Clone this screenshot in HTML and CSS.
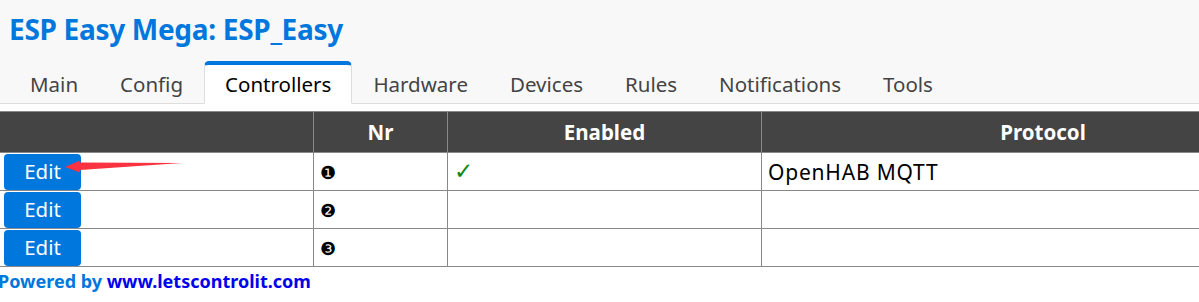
FILE: index.html
```html
<!DOCTYPE html>
<html>
<head>
<meta charset="utf-8">
<title>ESP Easy Mega: ESP_Easy</title>
<link rel="stylesheet" href="styles.css">
</head>
<body>
<header class="head">
  <h1 class="title">ESP Easy Mega: ESP_Easy</h1>
  <nav class="menubar">
    <a class="menu">Main</a>
    <a class="menu">Config</a>
    <a class="menu active">Controllers</a>
    <a class="menu">Hardware</a>
    <a class="menu">Devices</a>
    <a class="menu">Rules</a>
    <a class="menu">Notifications</a>
    <a class="menu">Tools</a>
  </nav>
</header>
<main class="content">
  <table class="multirow">
    <thead>
      <tr><th class="c1"></th><th class="c2">Nr</th><th class="c3">Enabled</th><th class="c4">Protocol</th></tr>
    </thead>
    <tbody>
      <tr><td class="btncell"><a class="button">Edit</a></td><td class="num">❶</td><td><span class="ok">✓</span></td><td class="proto">OpenHAB MQTT</td></tr>
      <tr><td class="btncell"><a class="button">Edit</a></td><td class="num">❷</td><td></td><td></td></tr>
      <tr><td class="btncell"><a class="button">Edit</a></td><td class="num">❸</td><td></td><td></td></tr>
    </tbody>
  </table>
  <svg class="arrow" width="200" height="30" viewBox="0 0 200 30">
    <polygon points="65,13 80,6.5 80,8.5 182,9 80,16 80,18.5" fill="#fb3340"/>
  </svg>
  <footer class="foot">Powered by <a class="link">www.letscontrolit.com</a></footer>
</main>
</body>
</html>
```
FILE: styles.css
```css
html, body {
  margin: 0;
  padding: 0;
}
body {
  background: #fff;
  font-family: "Noto Sans", "Open Sans", sans-serif;
  font-size: 20px;
  overflow: hidden;
  width: 1199px;
  height: 302px;
}
.head {
  background: #f8f8f8;
  padding-left: 9px;
  border-bottom: 1px solid #ddd;
}
.title {
  margin: 0;
  padding-top: 13px;
  height: 48px;
  font-size: 28px;
  font-weight: bold;
  color: #07d;
  line-height: 32px;
  letter-spacing: -0.3px;
}
.menubar {
  display: flex;
  height: 43px;
  margin-bottom: -1px;
}
.menu {
  display: block;
  padding: 6px 20px 0 20px;
  border: 1px solid transparent;
  border-top-width: 4px;
  border-radius: 5px 5px 0 0;
  color: #444;
  font-size: 20.5px;
  line-height: 26px;
  white-space: nowrap;
}
.menu.active {
  color: #000;
  background: #fff;
  border-color: #07d #ddd #fff;
}
.content {
  position: relative;
  padding-top: 7px;
}
.multirow {
  border-collapse: collapse;
  width: 1325px;
}
.multirow th {
  background: #444;
  color: #fff;
  border: 1px solid #888;
  font-size: 20.5px;
  font-weight: bold;
  height: 40px;
  padding: 0;
  text-align: center;
}
.c1 { width: 313px; border-left: none !important; }
.c2 { width: 133px; }
.c3 { width: 313px; }
.multirow td {
  border: 1px solid #888;
  height: 37px;
  padding: 0 6px;
  font-size: 18px;
  line-height: 20px;
  color: #000;
  vertical-align: middle;
}
.multirow td:first-child { border-left: none; }
.multirow td.btncell { padding: 0 0 0 4px; }
.multirow td.proto {
  font-size: 21px;
  letter-spacing: 0.8px;
}
.button {
  display: block;
  width: 77px;
  height: 36px;
  line-height: 35px;
  background: #07d;
  color: #fff;
  border-radius: 4px;
  text-align: center;
  font-size: 20.5px;
}
.ok {
  font-family: "DejaVu Sans", sans-serif;
  color: #0a8a0a;
  font-size: 23px;
  line-height: 20px;
}
.arrow {
  position: absolute;
  left: 0;
  top: 50px;
}
.foot {
  margin-left: -2px;
  padding-top: 2px;
  font-size: 18px;
  font-weight: bold;
  color: #07d;
}
.link {
  color: #00e;
}
```
